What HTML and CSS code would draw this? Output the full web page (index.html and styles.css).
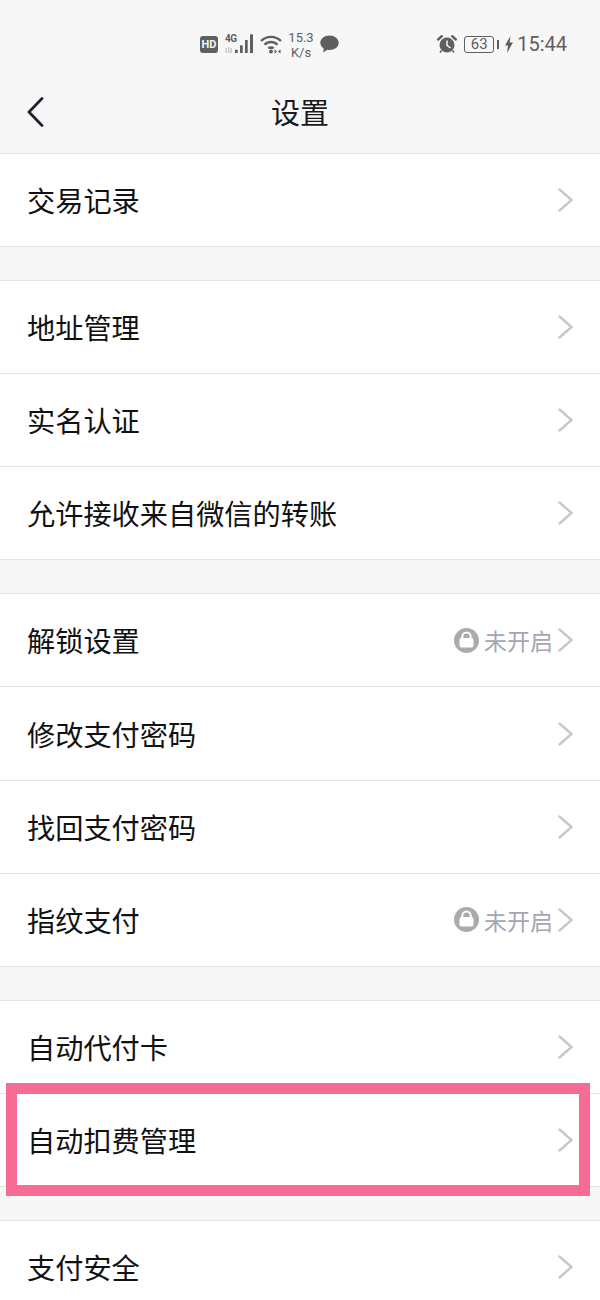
FILE: index.html
```html
<!DOCTYPE html>
<html lang="zh-CN">
<head>
<meta charset="utf-8">
<title>设置</title>
<link rel="stylesheet" href="styles.css">
</head>
<body>
<svg class="defs" width="0" height="0" aria-hidden="true">
  <symbol id="chev" viewBox="0 0 15 24"><path d="M1.500 1.500 L13.500 12 L1.500 22.500" fill="none" stroke="#c8c8c8" stroke-width="2.400" stroke-linecap="round" stroke-linejoin="round"/></symbol>
  <symbol id="lock" viewBox="0 0 25 25"><circle cx="12.500" cy="12.500" r="12.500" fill="#ababab"/><rect x="5.500" y="10" width="14" height="9.500" rx="2" fill="#fff"/><path d="M8.300 11V8.800a4.200 4.200 0 0 1 8.400 0V11" fill="none" stroke="#fff" stroke-width="2"/></symbol>
</svg>
<header class="top">
  <div class="status">
    <div class="status-left">
      <span class="hd">HD</span>
      <span class="net">
        <span class="net-4g">4G</span>
        <svg class="signal" width="29" height="20" viewBox="0 0 29 20"><g fill="#5f5f5f"><rect x="10" y="15.700" width="2.700" height="3.300"/><rect x="15" y="11.300" width="2.700" height="7.700"/><rect x="20" y="6" width="2.700" height="13"/><rect x="25" y="0.300" width="3" height="18.700"/></g><g fill="#c9c9c9"><rect x="0.500" y="14" width="1.500" height="5"/><rect x="3" y="13" width="1.500" height="6"/><rect x="5.500" y="14" width="1.500" height="5"/></g></svg>
      </span>
      <svg class="wifi" width="22" height="20" viewBox="0 0 22 20"><g fill="none" stroke="#5f5f5f" stroke-width="2.300"><path d="M1 7a14 14 0 0 1 20 0"/><path d="M4.500 10.800a9 9 0 0 1 13 0"/></g><path d="M7.500 13.800a5 5 0 0 1 7 0l-1.500 1.200h-4z" fill="#5f5f5f"/><circle cx="11" cy="17.500" r="2" fill="#5f5f5f"/><path d="M17 17.500l-2.500-2.200v4.400zM18 17.500l2.500-2.200v4.400z" fill="#5f5f5f"/></svg>
      <span class="speed"><span>15.3</span><span>K/s</span></span>
      <svg class="bubble" width="19" height="18" viewBox="0 0 19 18"><path d="M9.500 0.500c5 0 9.200 3.100 9.200 7.300S14.500 15 9.500 15c-.8 0-1.500-.1-2.200-.2L3.200 17.500l.5-4C1.700 12.200.3 10.200.3 7.800.3 3.600 4.500.500 9.500.500z" fill="#5f5f5f"/></svg>
    </div>
    <div class="status-right">
      <svg class="alarm" width="20" height="18" viewBox="0 0 20 18"><circle cx="10" cy="10" r="7.500" fill="#5f5f5f"/><path d="M10 5.500v4.800l3.500 2.700" fill="none" stroke="#f7f7f7" stroke-width="1.500"/><path d="M1.200 4.500L4.800 1.200M18.800 4.500L15.200 1.200" stroke="#5f5f5f" stroke-width="2.400" stroke-linecap="round"/><path d="M4.500 15.500l-1.500 2M15.500 15.500l1.500 2" stroke="#5f5f5f" stroke-width="1.600"/></svg>
      <span class="battery"><span class="battery-body">63</span><span class="battery-tip"></span></span>
      <svg class="bolt" width="8" height="17" viewBox="0 0 8 17"><path d="M5.500 0L0 9.500h3L2 17 8 6.500H4.700z" fill="#5f5f5f"/></svg>
      <span class="clock">15:44</span>
    </div>
  </div>
  <div class="nav">
    <svg class="back" width="17" height="30" viewBox="0 0 17 30"><path d="M15 1.500 L2 15 L15 28.500" fill="none" stroke="#1b2236" stroke-width="2.700" stroke-linecap="round" stroke-linejoin="round"/></svg>
    <h1 class="title">设置</h1>
  </div>
</header>
<main class="list">
  <section class="group">
    <div class="row"><span class="label">交易记录</span><svg class="chev"><use href="#chev"/></svg></div>
  </section>
  <section class="group">
    <div class="row"><span class="label">地址管理</span><svg class="chev"><use href="#chev"/></svg></div>
    <div class="row"><span class="label">实名认证</span><svg class="chev"><use href="#chev"/></svg></div>
    <div class="row"><span class="label">允许接收来自微信的转账</span><svg class="chev"><use href="#chev"/></svg></div>
  </section>
  <section class="group">
    <div class="row"><span class="label">解锁设置</span><span class="state"><svg class="lock"><use href="#lock"/></svg><span class="state-text">未开启</span></span><svg class="chev"><use href="#chev"/></svg></div>
    <div class="row"><span class="label">修改支付密码</span><svg class="chev"><use href="#chev"/></svg></div>
    <div class="row"><span class="label">找回支付密码</span><svg class="chev"><use href="#chev"/></svg></div>
    <div class="row"><span class="label">指纹支付</span><span class="state"><svg class="lock"><use href="#lock"/></svg><span class="state-text">未开启</span></span><svg class="chev"><use href="#chev"/></svg></div>
  </section>
  <section class="group">
    <div class="row"><span class="label">自动代付卡</span><svg class="chev"><use href="#chev"/></svg></div>
    <div class="row"><span class="label">自动扣费管理</span><svg class="chev"><use href="#chev"/></svg></div>
  </section>
  <section class="group">
    <div class="row"><span class="label">支付安全</span><svg class="chev"><use href="#chev"/></svg></div>
  </section>
</main>
<div class="highlight"></div>
</body>
</html>
```
FILE: styles.css
```css
* { box-sizing: border-box; margin: 0; padding: 0; }
html, body { width: 600px; height: 1300px; overflow: hidden; }
body {
  position: relative;
  background: #f7f7f7;
  color: #111;
  font-family: "Noto Sans CJK SC", "Liberation Sans", sans-serif;
}
.defs { position: absolute; }
.top { height: 154px; border-bottom: 1px solid #e4e4e4; background: #f7f7f7; }
.status {
  height: 68px;
  padding: 24px 33px 0 200px;
  display: flex;
  justify-content: space-between;
  color: #5f5f5f;
  font-family: Roboto, "Liberation Sans", sans-serif;
}
.status-left, .status-right { display: flex; align-items: center; height: 40px; }
.hd {
  width: 18px; height: 17px; border-radius: 3px;
  background: #5f5f5f; color: #f7f7f7;
  font-size: 11px; font-weight: 700; line-height: 17px; text-align: center;
  margin-right: 7px;
}
.net { position: relative; width: 29px; height: 20px; margin-right: 6px; }
.net-4g { position: absolute; left: 0; top: -1px; font-size: 10px; font-weight: 700; line-height: 11px; letter-spacing: -0.5px; }
.signal { display: block; }
.wifi { margin-right: 7px; }
.speed { display: flex; flex-direction: column; align-items: center; width: 24px; font-size: 13px; line-height: 15px; margin-right: 7px; margin-top: 1px; }
.alarm { margin-right: 7px; }
.battery { display: flex; align-items: center; margin-right: 6px; }
.battery-body {
  width: 30px; height: 17px; border: 1.5px solid #5f5f5f; border-radius: 3px;
  font-size: 15px; line-height: 14px; text-align: center;
}
.battery-tip { width: 2px; height: 9px; margin-left: 3px; background: #5f5f5f; }
.bolt { margin-right: 4px; }
.clock { font-size: 20px; line-height: 24px; }
.nav {
  height: 85px;
  display: grid;
  grid-template-columns: 1fr auto 1fr;
  align-items: center;
}
.back { margin-left: 27px; margin-top: 3px; }
.title { font-size: 29px; font-weight: 400; line-height: 40px; color: #1a1a1a; margin-top: 1px; }
.group { background: #fff; margin-bottom: 33px; }
.group + .group { border-top: 1px solid #e4e4e4; }
.row {
  height: 93.100px;
  padding: 0 27px;
  display: flex;
  align-items: center;
  border-bottom: 1px solid #e4e4e4;
}
.label { flex: 1; font-size: 28.200px; line-height: 40px; color: #111; }
.state { display: flex; align-items: center; margin-right: 5px; }
.lock { width: 25px; height: 25px; margin-right: 5px; }
.state-text { font-size: 23px; line-height: 32px; color: #a5a5b5; }
.chev { width: 15px; height: 24px; flex: none; }
.highlight {
  position: absolute;
  left: 6px; top: 1083px;
  width: 584px; height: 113px;
  border: 11px solid #f76c94;
}
```
